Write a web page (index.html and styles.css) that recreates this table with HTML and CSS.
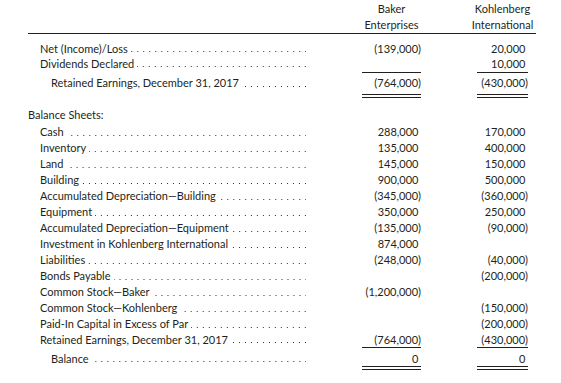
FILE: index.html
```html
<!DOCTYPE html>
<html>
<head>
<meta charset="utf-8">
<link rel="stylesheet" href="styles.css">
</head>
<body>
<div class="sheet">
  <div class="row head">
    <div class="lab"></div>
    <div class="hcol"><span>Baker</span><span>Enterprises</span></div>
    <div class="hcol"><span>Kohlenberg</span><span>International</span></div>
  </div>

  <div class="row tight first">
    <div class="lab"><span class="t">Net (Income)/Loss</span><span class="d"></span></div>
    <div class="num">(139,000)</div>
    <div class="num p">20,000</div>
  </div>
  <div class="row tight">
    <div class="lab"><span class="t">Dividends Declared</span><span class="d"></span></div>
    <div class="num"></div>
    <div class="num p">10,000</div>
  </div>
  <div class="row total-top">
    <div class="lab indent"><span class="t">Retained Earnings, December 31, 2017</span><span class="d"></span></div>
    <div class="num">(764,000)</div>
    <div class="num">(430,000)</div>
  </div>

  <div class="section-title">Balance Sheets:</div>

  <div class="row">
    <div class="lab"><span class="t">Cash</span><span class="d"></span></div>
    <div class="num p">288,000</div>
    <div class="num p">170,000</div>
  </div>
  <div class="row">
    <div class="lab"><span class="t">Inventory</span><span class="d"></span></div>
    <div class="num p">135,000</div>
    <div class="num p">400,000</div>
  </div>
  <div class="row">
    <div class="lab"><span class="t">Land</span><span class="d"></span></div>
    <div class="num p">145,000</div>
    <div class="num p">150,000</div>
  </div>
  <div class="row">
    <div class="lab"><span class="t">Building</span><span class="d"></span></div>
    <div class="num p">900,000</div>
    <div class="num p">500,000</div>
  </div>
  <div class="row">
    <div class="lab"><span class="t">Accumulated Depreciation—Building</span><span class="d"></span></div>
    <div class="num">(345,000)</div>
    <div class="num">(360,000)</div>
  </div>
  <div class="row">
    <div class="lab"><span class="t">Equipment</span><span class="d"></span></div>
    <div class="num p">350,000</div>
    <div class="num p">250,000</div>
  </div>
  <div class="row">
    <div class="lab"><span class="t">Accumulated Depreciation—Equipment</span><span class="d"></span></div>
    <div class="num">(135,000)</div>
    <div class="num">(90,000)</div>
  </div>
  <div class="row">
    <div class="lab"><span class="t">Investment in Kohlenberg International</span><span class="d"></span></div>
    <div class="num p">874,000</div>
    <div class="num"></div>
  </div>
  <div class="row">
    <div class="lab"><span class="t">Liabilities</span><span class="d"></span></div>
    <div class="num">(248,000)</div>
    <div class="num">(40,000)</div>
  </div>
  <div class="row">
    <div class="lab"><span class="t">Bonds Payable</span><span class="d"></span></div>
    <div class="num"></div>
    <div class="num">(200,000)</div>
  </div>
  <div class="row">
    <div class="lab"><span class="t">Common Stock—Baker</span><span class="d"></span></div>
    <div class="num">(1,200,000)</div>
    <div class="num"></div>
  </div>
  <div class="row">
    <div class="lab"><span class="t">Common Stock—Kohlenberg</span><span class="d"></span></div>
    <div class="num"></div>
    <div class="num">(150,000)</div>
  </div>
  <div class="row">
    <div class="lab"><span class="t">Paid-In Capital in Excess of Par</span><span class="d"></span></div>
    <div class="num"></div>
    <div class="num">(200,000)</div>
  </div>
  <div class="row sub-bottom">
    <div class="lab"><span class="t">Retained Earnings, December 31, 2017</span><span class="d"></span></div>
    <div class="num">(764,000)</div>
    <div class="num">(430,000)</div>
  </div>
  <div class="row grand">
    <div class="lab indent"><span class="t">Balance</span><span class="d"></span></div>
    <div class="num p">0</div>
    <div class="num p">0</div>
  </div>
</div>
</body>
</html>
```

FILE: styles.css
```css
* { box-sizing: border-box; }

body {
  margin: 0;
  background: #ffffff;
  color: #231f20;
  font-family: Lato, "Noto Sans", sans-serif;
  font-size: 11px;
}

.sheet {
  margin-left: 28px;
  width: 508px;
  padding-top: 1px;
}

.row {
  display: grid;
  grid-template-columns: 266px 59px 51px;
  column-gap: 56px;
  padding-left: 12px;
  line-height: 16px;
}

.head {
  line-height: 16px;
  border-bottom: 1px solid #231f20;
}

.hcol {
  display: flex;
  flex-direction: column;
  align-items: center;
  white-space: nowrap;
}

.lab {
  display: flex;
  white-space: nowrap;
}

.lab.indent { padding-left: 11px; }

.lab .d {
  flex: 1;
  margin-left: 3px;
  background-image: linear-gradient(to left, #333333 1.3px, transparent 1.3px);
  background-size: 6px 1.3px;
  background-repeat: repeat-x;
  background-position: right 0 bottom 3.5px;
}

.num {
  display: flex;
  justify-content: flex-end;
  white-space: nowrap;
}

.num.p { padding-right: 2.5px; }

.tight { line-height: 15px; }
.first { margin-top: 7px; }

.total-top { margin-top: 1px; }
.total-top > * {
  border-top: 1px solid transparent;
  border-bottom: 4px double transparent;
  padding-top: 2px;
  padding-bottom: 3px;
}
.total-top > .num {
  border-top-color: #231f20;
  border-bottom-color: #231f20;
}

.section-title {
  line-height: 16px;
  margin-top: 9px;
  margin-bottom: 1px;
}

.sub-bottom { line-height: 15px; }
.sub-bottom > * { border-bottom: 1px solid transparent; }
.sub-bottom > .num { border-bottom-color: #231f20; }

.grand { line-height: 15px; }
.grand > * {
  padding-top: 3px;
  border-bottom: 4px double transparent;
}
.grand > .num { border-bottom-color: #231f20; }
```
